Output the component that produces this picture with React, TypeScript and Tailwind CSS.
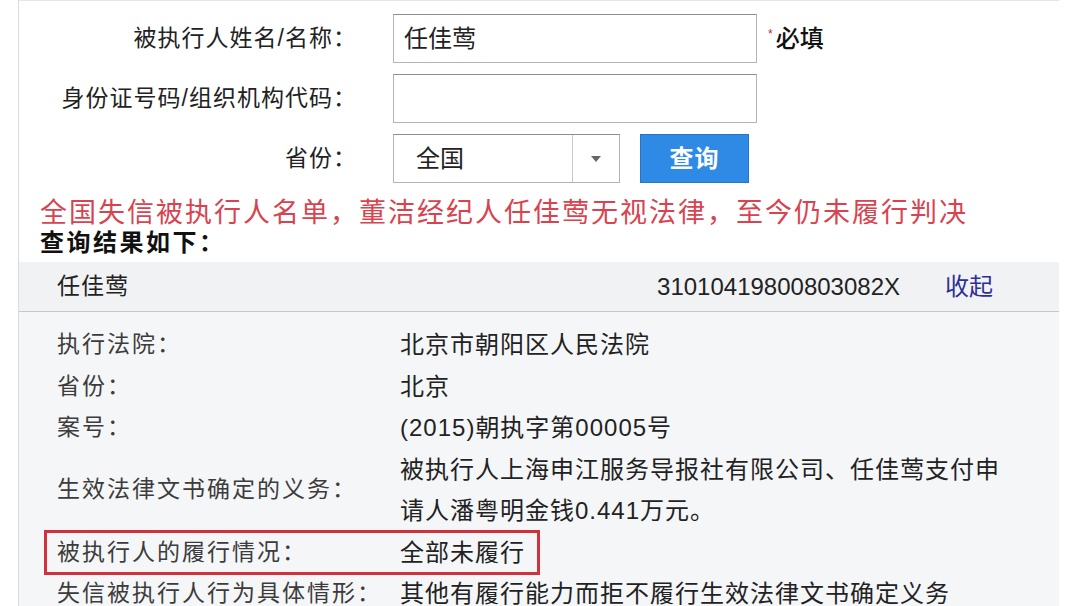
import React from 'react';

const details: { label: string; value: string[]; boxed?: boolean }[] = [
  { label: '执行法院：', value: ['北京市朝阳区人民法院'] },
  { label: '省份：', value: ['北京'] },
  { label: '案号：', value: ['(2015)朝执字第00005号'] },
  {
    label: '生效法律文书确定的义务：',
    value: ['被执行人上海申江服务导报社有限公司、任佳莺支付申', '请人潘粤明金钱0.441万元。'],
  },
  { label: '被执行人的履行情况：', value: ['全部未履行'], boxed: true },
  { label: '失信被执行人行为具体情形：', value: ['其他有履行能力而拒不履行生效法律文书确定义务'] },
];

const FormRow = ({ label, children }: { label: string; children: React.ReactNode }) => (
  <div className="flex items-center h-[49px]">
    <div className="w-[338px] text-right text-[23px] tracking-[1px] text-[#222] leading-none">{label}</div>
    <div className="ml-[36px] flex items-center">{children}</div>
  </div>
);

const App = () => {
  return (
    <div
      className="w-full h-[606px] overflow-hidden bg-white"
      style={{ fontFamily: '"Liberation Sans", "Noto Sans CJK SC", sans-serif' }}
    >
      <div className="ml-[18px] w-[1041px] h-full border-l border-t border-[#e6e6e6] border-l-[#dcdcdc]">
        {/* search form */}
        <div className="pt-[13px] flex flex-col gap-[11px]">
          <FormRow label="被执行人姓名/名称：">
            <div className="w-[364px] h-[49px] border border-[#b4b4b4] border-t-[#8e8e8e] bg-white flex items-center pl-[10px] text-[24px] text-[#222]">
              任佳莺
            </div>
            <div className="ml-[11px] flex items-center text-[#111]">
              <span className="text-[12px] text-[#a33] leading-none mt-[-10px] mr-[3px]">*</span>
              <span className="text-[24px] font-medium">必填</span>
            </div>
          </FormRow>
          <FormRow label="身份证号码/组织机构代码：">
            <div className="w-[364px] h-[49px] border border-[#b4b4b4] border-t-[#8e8e8e] bg-white" />
          </FormRow>
          <FormRow label="省份：">
            <div className="w-[227px] h-[49px] border border-[#b4b4b4] border-t-[#8e8e8e] bg-white flex items-center">
              <div className="flex-1 pl-[22px] text-[24px] text-[#222]">全国</div>
              <div className="w-[47px] h-full border-l border-[#c8c8c8] flex items-center justify-center">
                <span className="w-0 h-0 border-l-[5px] border-r-[5px] border-t-[6px] border-l-transparent border-r-transparent border-t-[#666]" />
              </div>
            </div>
            <div className="ml-[20px] w-[109px] h-[49px] bg-[#2f8ae6] border border-[#2574cc] flex items-center justify-center text-white text-[24px] font-bold tracking-[1px]">
              查询
            </div>
          </FormRow>
        </div>

        {/* caption */}
        <div className="mt-[15px] pl-[21px] text-[27px] leading-[30px] tracking-[2px] text-[#d9434f] whitespace-nowrap">
          全国失信被执行人名单，董洁经纪人任佳莺无视法律，至今仍未履行判决
        </div>
        <div className="pl-[21px] text-[24px] leading-[30px] tracking-[2.5px] font-bold text-[#111]">查询结果如下：</div>

        {/* result panel */}
        <div className="mt-[4px] bg-[#f5f6f8]">
          <div className="h-[50px] bg-[#f1f2f4] border-b border-[#c9c9c9] flex items-center pl-[38px] pr-[66px]">
            <span className="text-[23px] tracking-[1px] text-[#222]">任佳莺</span>
            <span className="ml-auto text-[24px] text-[#222]">31010419800803082X</span>
            <span className="ml-[45px] text-[24px] text-[#2b2f96]">收起</span>
          </div>
          <div className="pt-[12px] pl-[38px]">
            {details.map((d) => (
              <div key={d.label} className="relative flex items-center text-[23px] leading-[41.5px]">
                <div className="w-[343px] shrink-0 tracking-[2px] text-[#3c3c3c]">{d.label}</div>
                <div className="tracking-[1px] text-[#222] whitespace-nowrap">
                  {d.value.map((line) => (
                    <div key={line} className="text-[24px]">
                      {line}
                    </div>
                  ))}
                </div>
                {d.boxed && (
                  <div className="absolute left-[-13px] top-[-2px] w-[496px] h-[45px] border-[3px] border-[#d2303a]" />
                )}
              </div>
            ))}
          </div>
        </div>
      </div>
    </div>
  );
};

export default App;
